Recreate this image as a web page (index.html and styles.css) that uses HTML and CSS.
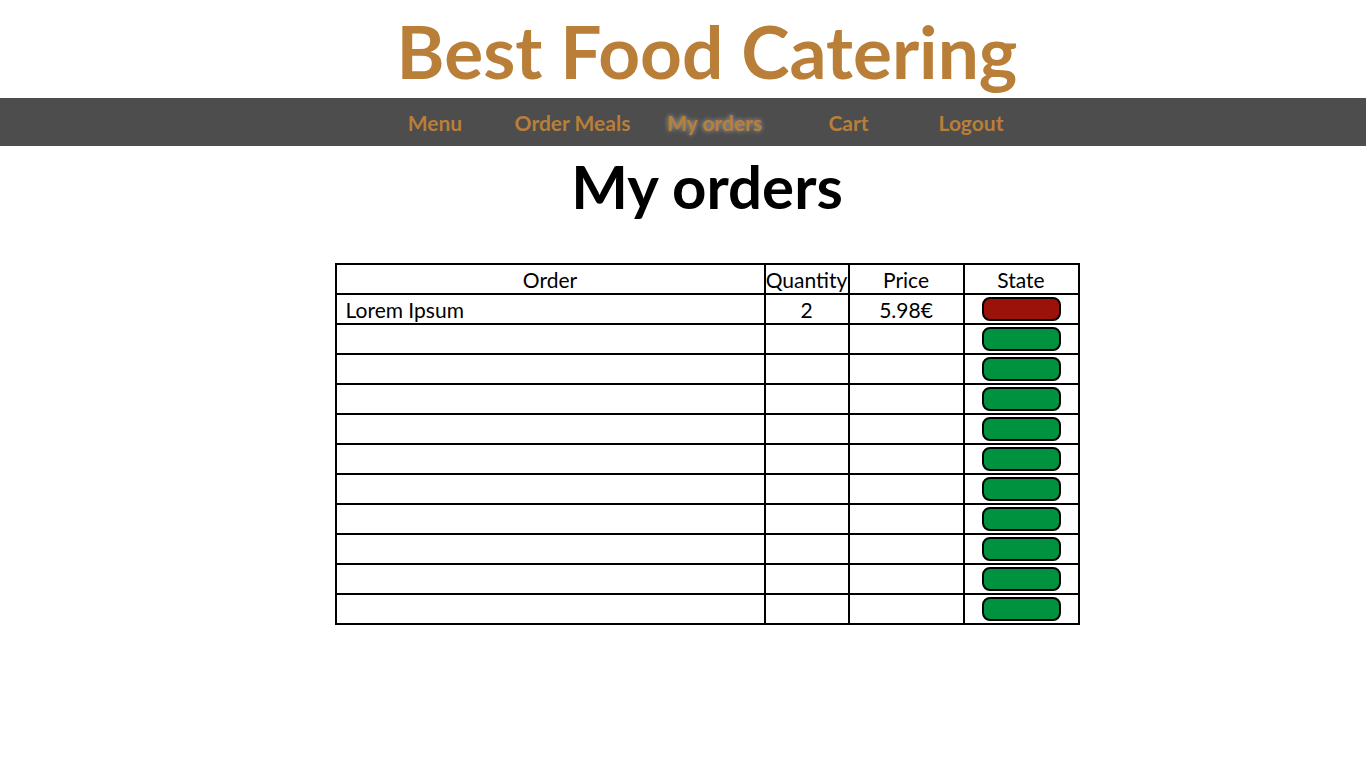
FILE: index.html
```html
<!DOCTYPE html>
<html lang="en">
<head>
    <meta charset="UTF-8">
    <meta name="viewport" content="width=device-width, initial-scale=1.0">
    <title>My orders - Best Food Catering</title>
    <link rel="stylesheet" href="styles.css">
</head>
<body>

<header class="site-header">
    <h1 class="brand">Best Food Catering</h1>
</header>

<nav class="main-nav">
    <ul class="nav-list">
        <li><a href="#">Menu</a></li>
        <li><a href="#">Order Meals</a></li>
        <li><a href="#" class="active">My orders</a></li>
        <li><a href="#">Cart</a></li>
        <li><a href="#">Logout</a></li>
    </ul>
</nav>

<main class="content">
    <h2 class="page-title">My orders</h2>

    <table class="orders">
        <thead>
            <tr>
                <th class="col-order">Order</th>
                <th class="col-qty">Quantity</th>
                <th class="col-price">Price</th>
                <th class="col-state">State</th>
            </tr>
        </thead>
        <tbody>
            <tr>
                <td class="order-name">Lorem Ipsum</td>
                <td>2</td>
                <td>5.98€</td>
                <td><span class="state pending"></span></td>
            </tr>
            <tr><td></td><td></td><td></td><td><span class="state done"></span></td></tr>
            <tr><td></td><td></td><td></td><td><span class="state done"></span></td></tr>
            <tr><td></td><td></td><td></td><td><span class="state done"></span></td></tr>
            <tr><td></td><td></td><td></td><td><span class="state done"></span></td></tr>
            <tr><td></td><td></td><td></td><td><span class="state done"></span></td></tr>
            <tr><td></td><td></td><td></td><td><span class="state done"></span></td></tr>
            <tr><td></td><td></td><td></td><td><span class="state done"></span></td></tr>
            <tr><td></td><td></td><td></td><td><span class="state done"></span></td></tr>
            <tr><td></td><td></td><td></td><td><span class="state done"></span></td></tr>
            <tr><td></td><td></td><td></td><td><span class="state done"></span></td></tr>
        </tbody>
    </table>
</main>

</body>
</html>
```

FILE: styles.css
```css
body {
    font-family: Lato, "Open Sans", sans-serif;
    background-color: #fff;
    color: #000;
    margin: 0;
    padding: 0;
}

.site-header {
    height: 98px;
    padding-left: 48px;
    display: flex;
    align-items: center;
    justify-content: center;
}

.brand {
    font-size: 73px;
    font-weight: bold;
    color: #b97e38;
    margin: 0;
    line-height: 1;
    padding-top: 4px;
}

.main-nav {
    background-color: #4d4d4d;
    height: 48px;
    padding-left: 33px;
}

.nav-list {
    list-style: none;
    margin: 0;
    padding: 0;
    height: 100%;
    display: grid;
    grid-template-columns: 133px 142px 142px 126px 119px;
    justify-content: center;
    align-items: center;
}

.nav-list li {
    text-align: center;
}

.nav-list a {
    font-size: 21px;
    font-weight: bold;
    color: #b97e38;
    text-decoration: none;
}

.nav-list a.active {
    text-shadow: 0 0 5px #aaa;
}

.content {
    padding-left: 48px;
    display: flex;
    flex-direction: column;
    align-items: center;
}

.page-title {
    font-size: 60px;
    font-weight: bold;
    margin: 8px 0 45px;
    line-height: 64px;
}

.orders {
    border-collapse: collapse;
    border: 2px solid #000;
    font-size: 21px;
}

.orders th,
.orders td {
    border: 2px solid #000;
    height: 28px;
    padding: 0;
    text-align: center;
    vertical-align: middle;
    font-weight: normal;
}

.col-order { width: 427px; }
.col-qty { width: 82px; }
.col-price { width: 113px; }
.col-state { width: 113px; }

.orders .order-name {
    text-align: left;
    padding-left: 9px;
}

.state {
    display: block;
    width: 75px;
    height: 20px;
    margin: 0 auto;
    border: 2px solid #000;
    border-radius: 8px;
}

.state.pending {
    background-color: #9b120b;
}

.state.done {
    background-color: #00923f;
}
```
